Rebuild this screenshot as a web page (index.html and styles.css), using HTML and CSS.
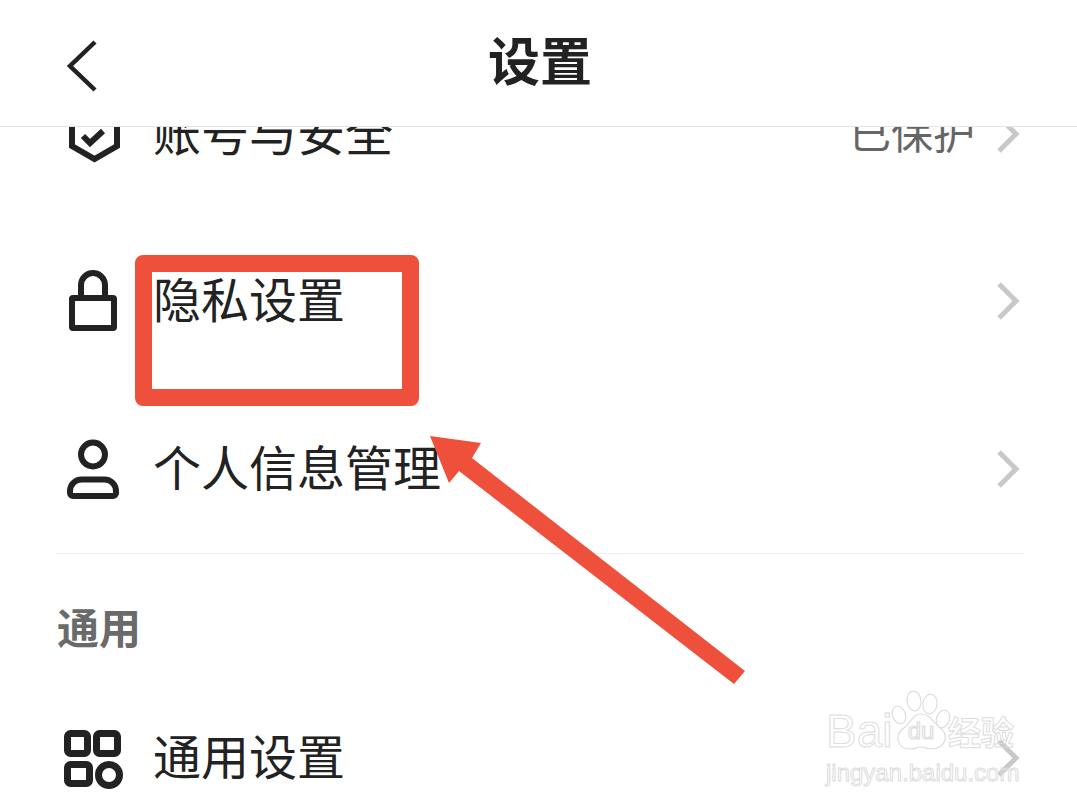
FILE: index.html
```html
<!DOCTYPE html>
<html lang="zh-CN">

<head>
    <meta charset="UTF-8">
    <title>设置</title>
    <link rel="stylesheet" href="styles.css">
</head>

<body>
    <div class="screen">
        <header class="topbar">
            <svg class="back-icon" viewBox="0 0 32 52" aria-hidden="true">
                <path d="M29 2 4 26l25 24" />
            </svg>
            <h1>设置</h1>
        </header>

        <main class="list">
            <section class="group">
                <div class="row">
                    <svg class="row-icon" viewBox="0 0 60 60" aria-hidden="true">
                        <path d="M9 -8V42l22.500 13L54 42V-8" />
                        <path class="check" d="M20 32l7 7 13-12" />
                    </svg>
                    <span class="row-label">账号与安全</span>
                    <span class="row-value">已保护</span>
                    <svg class="chevron" viewBox="0 0 24 40" aria-hidden="true"><path d="M3 3l17 17L3 37" /></svg>
                </div>
                <div class="row">
                    <svg class="row-icon" viewBox="0 0 60 60" aria-hidden="true">
                        <rect x="9" y="27" width="42" height="30" rx="1" />
                        <path d="M18 27V14a12 12 0 0 1 24 0v13" />
                    </svg>
                    <span class="row-label">隐私设置</span>
                    <svg class="chevron" viewBox="0 0 24 40" aria-hidden="true"><path d="M3 3l17 17L3 37" /></svg>
                </div>
                <div class="row">
                    <svg class="row-icon" viewBox="0 0 60 60" aria-hidden="true">
                        <circle cx="30" cy="15.500" r="12" />
                        <path d="M7 54v-2a11.500 11.500 0 0 1 11.500-11.500h23A11.500 11.500 0 0 1 53 52v2a3 3 0 0 1-3 3H10a3 3 0 0 1-3-3z" />
                    </svg>
                    <span class="row-label">个人信息管理</span>
                    <svg class="chevron" viewBox="0 0 24 40" aria-hidden="true"><path d="M3 3l17 17L3 37" /></svg>
                </div>
            </section>

            <section class="group">
                <h2>通用</h2>
                <div class="row">
                    <svg class="row-icon grid-icon" viewBox="0 0 60 60" aria-hidden="true">
                        <rect x="4.500" y="5.500" width="20" height="20" rx="3" />
                        <rect x="33.500" y="5.500" width="21" height="20" rx="3" />
                        <rect x="4.500" y="36.500" width="22" height="19" rx="3" />
                        <circle cx="46" cy="47" r="10.500" />
                    </svg>
                    <span class="row-label">通用设置</span>
                    <svg class="chevron" viewBox="0 0 24 40" aria-hidden="true"><path d="M3 3l17 17L3 37" /></svg>
                </div>
            </section>
        </main>

        <!-- annotation drawn over the screenshot -->
        <div class="mark-box"></div>
        <svg class="mark-arrow" viewBox="0 0 1077 807" aria-hidden="true">
            <polygon points="430,436 481,443 472,458 745,671 734,684 459,471 449,483" />
        </svg>

        <div class="watermark">
            <div class="wm-top">
                <span class="wm-bai">Bai</span>
                <svg class="wm-paw" viewBox="0 0 64 68" aria-hidden="true">
                    <ellipse cx="9" cy="27" rx="6.500" ry="9" transform="rotate(-20 9 27)" />
                    <ellipse cx="24" cy="13" rx="7" ry="10" transform="rotate(-8 24 13)" />
                    <ellipse cx="40" cy="16" rx="7" ry="10" transform="rotate(8 40 16)" />
                    <ellipse cx="53" cy="31" rx="6.500" ry="9" transform="rotate(20 53 31)" />
                    <path d="M31 26c9 0 12 8 18 13 6 4 7 9 6 13-2 7-8 9-14 9-4 0-7-2-10-2s-6 2-11 2c-6 0-11-3-12-9-1-6 3-10 7-13 6-5 8-13 16-13z" />
                    <text x="31" y="51" text-anchor="middle">du</text>
                </svg>
                <span class="wm-cn">经验</span>
            </div>
            <div class="wm-url">jingyan.baidu.com</div>
        </div>
    </div>
</body>

</html>
```

FILE: styles.css
```css
* {
    margin: 0;
    padding: 0;
    box-sizing: border-box;
}

html,
body {
    height: 100%;
    overflow: hidden;
    background-color: #fff;
}

body {
    font-family: "Noto Sans CJK SC", "Noto Sans", sans-serif;
    color: #222;
}

.screen {
    position: relative;
    width: 1077px;
    height: 807px;
    overflow: hidden;
}

/* top bar covers the first row while scrolled */
.topbar {
    position: relative;
    z-index: 1;
    height: 127px;
    display: flex;
    align-items: center;
    justify-content: center;
    background-color: #fff;
    border-bottom: 1px solid #e4e4e4;
}

.topbar h1 {
    font-size: 52px;
    font-weight: 700;
    line-height: 1;
    margin-bottom: 9px;
    margin-left: 3px;
}

.back-icon {
    position: absolute;
    left: 66px;
    top: 40px;
    width: 32px;
    height: 52px;
    fill: none;
    stroke: #222;
    stroke-width: 4.500;
}

.list {
    margin-top: -77px;
    padding: 0 57px 0 56px;
}

.group + .group {
    border-top: 1px solid #eee;
    margin-right: -4px;
    padding-right: 4px;
}

.group h2 {
    font-size: 42px;
    font-weight: 700;
    line-height: 60px;
    color: #6a6a6a;
    padding-top: 42px;
    padding-left: 1px;
    height: 121px;
}

.row {
    display: flex;
    align-items: center;
    height: 167.500px;
}

.row-icon {
    flex: none;
    width: 60px;
    height: 60px;
    margin-left: 7px;
    margin-right: 30px;
    fill: none;
    stroke: #222;
    stroke-width: 6;
    overflow: visible;
}

.grid-icon {
    stroke-width: 7;
}

.row-label {
    flex: 1;
    font-size: 48px;
    line-height: 60px;
    margin-bottom: 8px;
}

.row-value {
    font-size: 42px;
    line-height: 60px;
    color: #666;
    margin-right: 21px;
    margin-bottom: 6px;
}

.chevron {
    flex: none;
    width: 24px;
    height: 40px;
    fill: none;
    stroke: #c8c8c8;
    stroke-width: 5;
}

.mark-box {
    position: absolute;
    left: 135px;
    top: 255px;
    width: 284px;
    height: 151px;
    border: 17px solid #ee503c;
    border-radius: 8px;
}

.mark-arrow {
    position: absolute;
    left: 0;
    top: 0;
    width: 1077px;
    height: 807px;
    fill: #ee503c;
}

.watermark {
    position: absolute;
    left: 826px;
    top: 690px;
    width: 200px;
    color: transparent;
}

.wm-top {
    display: flex;
    align-items: flex-end;
    height: 66px;
}

.wm-bai {
    font-family: "Liberation Sans", sans-serif;
    font-size: 46px;
    line-height: 50px;
    -webkit-text-stroke: 1px #ddd;
    width: 66px;
}

.wm-paw {
    flex: none;
    width: 64px;
    height: 68px;
    margin-left: -2px;
    fill: #fff;
    stroke: #ddd;
    stroke-width: 1.200;
}

.wm-paw text {
    font-family: "Liberation Sans", sans-serif;
    font-size: 24px;
    fill: transparent;
}

.wm-cn {
    font-size: 33px;
    line-height: 50px;
    font-weight: 700;
    -webkit-text-stroke: 1px #ddd;
    margin-left: -6px;
    white-space: nowrap;
}

.wm-url {
    font-family: "Liberation Sans", sans-serif;
    font-size: 24px;
    line-height: 30px;
    margin-top: 2px;
    white-space: nowrap;
    -webkit-text-stroke: 1px #ddd;
}
```
